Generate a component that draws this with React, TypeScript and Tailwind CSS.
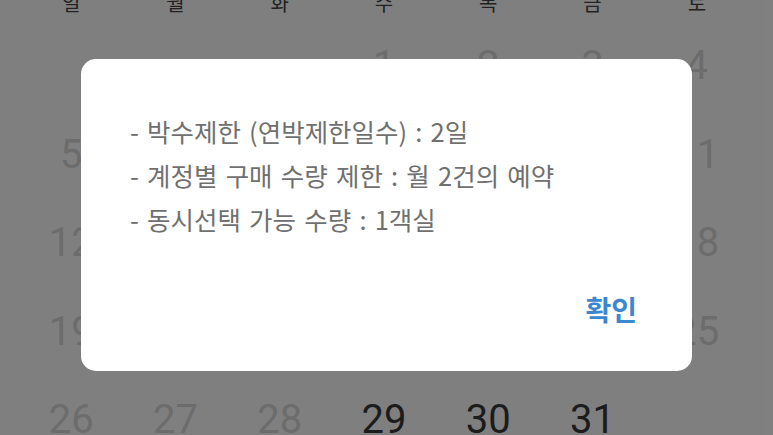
import React from "react";

const weekdays = ["일", "월", "화", "수", "목", "금", "토"];

const rows: (number | null)[][] = [
  [null, null, null, 1, 2, 3, 4],
  [5, 6, 7, 8, 9, 10, 11],
  [12, 13, 14, 15, 16, 17, 18],
  [19, 20, 21, 22, 23, 24, 25],
  [26, 27, 28, 29, 30, 31, null],
];

const lines = [
  "- 박수제한 (연박제한일수) : 2일",
  "- 계정별 구매 수량 제한 : 월 2건의 예약",
  "- 동시선택 가능 수량 : 1객실",
];

export default function App() {
  return (
    <div className="relative w-[773px] h-[435px] overflow-hidden bg-white">
      {/* calendar beneath */}
      <div className="-mt-[16px] pl-[19px] pr-[24px]">
        <div className="grid grid-cols-7 h-[38px] items-center">
          {weekdays.map((d) => (
            <div
              key={d}
              className="text-center text-[20px] leading-none text-[#444444] [font-family:'Noto_Sans_CJK_KR',sans-serif]"
            >
              {d}
            </div>
          ))}
        </div>
        {rows.map((r, i) => (
          <div key={i} className="grid grid-cols-7 h-[88.5px] items-center">
            {r.map((n, j) => (
              <div
                key={j}
                className={
                  "text-center text-[40px] leading-none [font-family:Roboto,sans-serif] " +
                  (n !== null && n >= 29 ? "text-[#383838]" : "text-[#d9d9d9]")
                }
              >
                {n ?? ""}
              </div>
            ))}
          </div>
        ))}
      </div>

      {/* overlay */}
      <div className="absolute inset-0 bg-black/50 flex items-center justify-center pb-[5px]">
        <div className="w-[611px] h-[312px] bg-white rounded-[15px] flex flex-col [font-family:'Noto_Sans_CJK_KR',sans-serif]">
          <div className="pt-[50px] pl-[49px] flex flex-col">
            {lines.map((l) => (
              <div
                key={l}
                className="text-[25.5px] leading-[44px] [word-spacing:2.5px] text-[#707070] whitespace-nowrap"
              >
                {l}
              </div>
            ))}
          </div>
          <div className="mt-[46px] flex justify-end pr-[55px]">
            <button className="text-[28px] leading-[44px] font-bold text-[#3b87d0]">확인</button>
          </div>
        </div>
      </div>
    </div>
  );
}
